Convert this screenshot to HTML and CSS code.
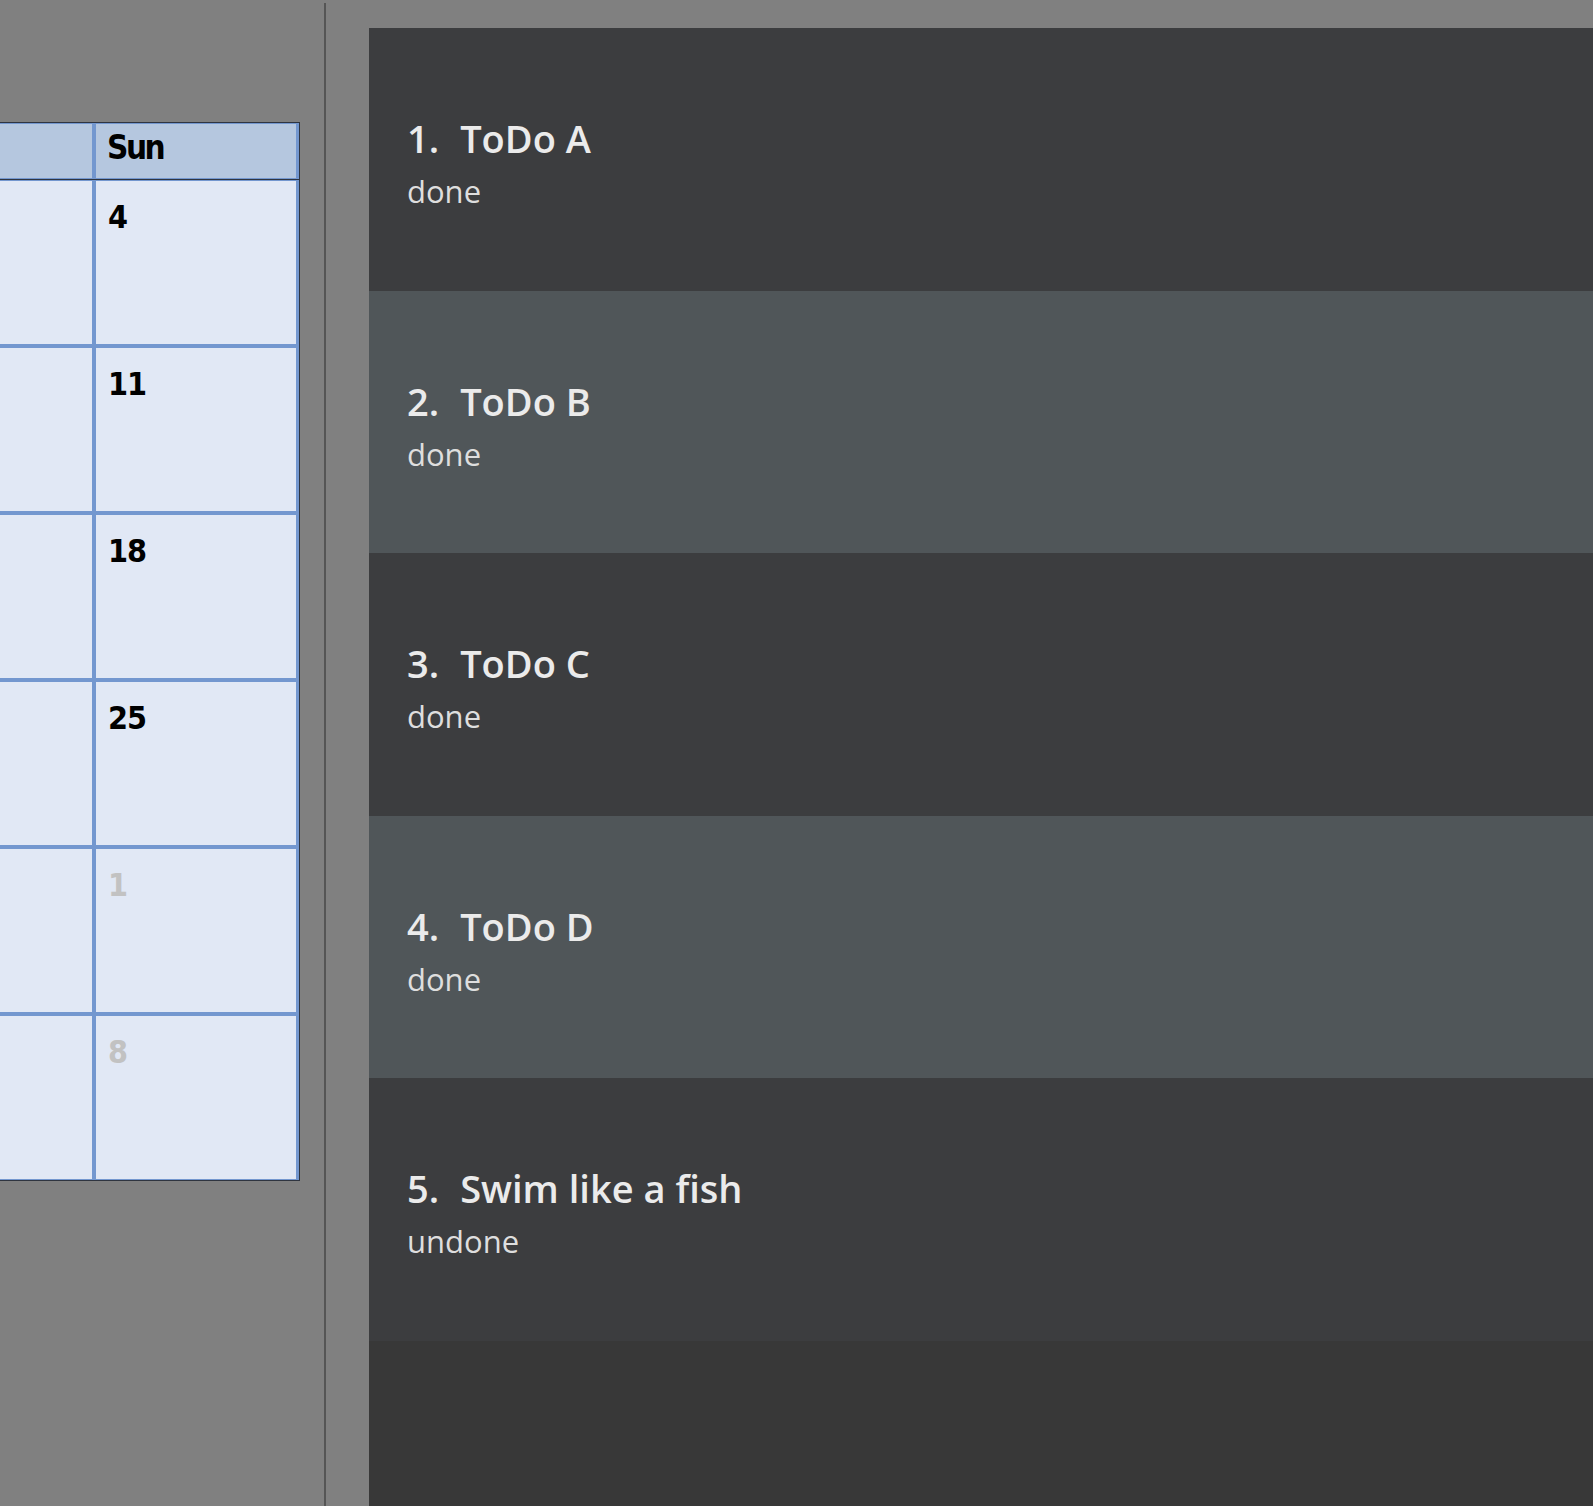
FILE: index.html
```html
<!DOCTYPE html>
<html>
<head>
<meta charset="utf-8">
<link rel="stylesheet" href="styles.css">
</head>
<body>
<div class="app">
  <aside class="left">
    <div class="calendar">
      <div class="cal-head">
        <div class="hcell">Mon</div>
        <div class="hcell">Tue</div>
        <div class="hcell">Wed</div>
        <div class="hcell">Thu</div>
        <div class="hcell">Fri</div>
        <div class="hcell">Sat</div>
        <div class="hcell">Sun</div>
      </div>
      <div class="cal-body">
        <div class="cell other">29</div><div class="cell other">30</div><div class="cell other">31</div><div class="cell">1</div><div class="cell">2</div><div class="cell">3</div><div class="cell">4</div>
        <div class="cell">5</div><div class="cell">6</div><div class="cell">7</div><div class="cell">8</div><div class="cell">9</div><div class="cell">10</div><div class="cell">11</div>
        <div class="cell">12</div><div class="cell">13</div><div class="cell">14</div><div class="cell">15</div><div class="cell">16</div><div class="cell">17</div><div class="cell">18</div>
        <div class="cell">19</div><div class="cell">20</div><div class="cell">21</div><div class="cell">22</div><div class="cell">23</div><div class="cell">24</div><div class="cell">25</div>
        <div class="cell">26</div><div class="cell">27</div><div class="cell">28</div><div class="cell">29</div><div class="cell">30</div><div class="cell">31</div><div class="cell other">1</div>
        <div class="cell other">2</div><div class="cell other">3</div><div class="cell other">4</div><div class="cell other">5</div><div class="cell other">6</div><div class="cell other">7</div><div class="cell other">8</div>
      </div>
    </div>
  </aside>
  <div class="divider"></div>
  <main class="right">
    <ul class="todo-list">
      <li class="todo odd"><div class="title"><span class="num">1.</span><span>ToDo A</span></div><div class="status">done</div></li>
      <li class="todo even"><div class="title"><span class="num">2.</span><span>ToDo B</span></div><div class="status">done</div></li>
      <li class="todo odd"><div class="title"><span class="num">3.</span><span>ToDo C</span></div><div class="status">done</div></li>
      <li class="todo even"><div class="title"><span class="num">4.</span><span>ToDo D</span></div><div class="status">done</div></li>
      <li class="todo odd"><div class="title"><span class="num">5.</span><span>Swim like a fish</span></div><div class="status">undone</div></li>
    </ul>
  </main>
</div>
</body>
</html>
```

FILE: styles.css
```css
html, body {
  margin: 0;
  padding: 0;
}
body {
  background: #808080;
  width: 1593px;
  height: 1506px;
  overflow: hidden;
}
.app {
  display: flex;
  height: 1506px;
}
.left {
  width: 300px;
  padding: 122px 24px 0 0;
  display: flex;
  justify-content: flex-end;
  align-items: flex-start;
  overflow: hidden;
  flex-shrink: 0;
}
.calendar {
  flex-shrink: 0;
  border: 1px solid #2f3540;
  background: #7397cf;
  font-family: "DejaVu Sans Condensed", "DejaVu Sans", sans-serif;
  font-stretch: condensed;
  font-weight: bold;
}
.cal-head {
  display: grid;
  grid-template-columns: repeat(7, 200px);
  column-gap: 4px;
  padding: 1px 3px 1px 3px;
  border-bottom: 1px solid #2f3540;
}
.hcell {
  height: 54px;
  background: #b5c7df;
  color: #000;
  font-size: 33px;
  letter-spacing: -2.5px;
  line-height: 48px;
  padding-left: 11px;
}
.cal-body {
  display: grid;
  grid-template-columns: repeat(7, 200px);
  grid-auto-rows: 163px;
  gap: 4px;
  padding: 1px 3px 1px 3px;
}
.cell {
  background: #e1e8f5;
  color: #000;
  font-size: 32px;
  line-height: 36px;
  padding: 18px 0 0 12px;
  letter-spacing: -1px;
}
.cell.other {
  color: #c2c2c2;
}
.divider {
  width: 2px;
  margin-top: 3px;
  background: #555555;
  flex-shrink: 0;
}
.right {
  flex: 1;
  padding: 28px 0 0 43px;
  display: flex;
  flex-direction: column;
}
.todo-list {
  list-style: none;
  margin: 0;
  padding: 0;
  flex: 1;
  background: #383838;
}
.todo {
  height: 262.6px;
  box-sizing: border-box;
  padding: 87px 0 0 38px;
  font-family: "Open Sans", "Noto Sans", sans-serif;
}
.todo.odd {
  background: #3c3d3f;
}
.todo.even {
  background: #505659;
}
.title {
  display: flex;
  gap: 21px;
  font-size: 38px;
  line-height: 46px;
  font-weight: 600;
  color: #ebebeb;
}
.status {
  margin-top: 12px;
  font-size: 31px;
  line-height: 36px;
  color: #dedede;
}
```
